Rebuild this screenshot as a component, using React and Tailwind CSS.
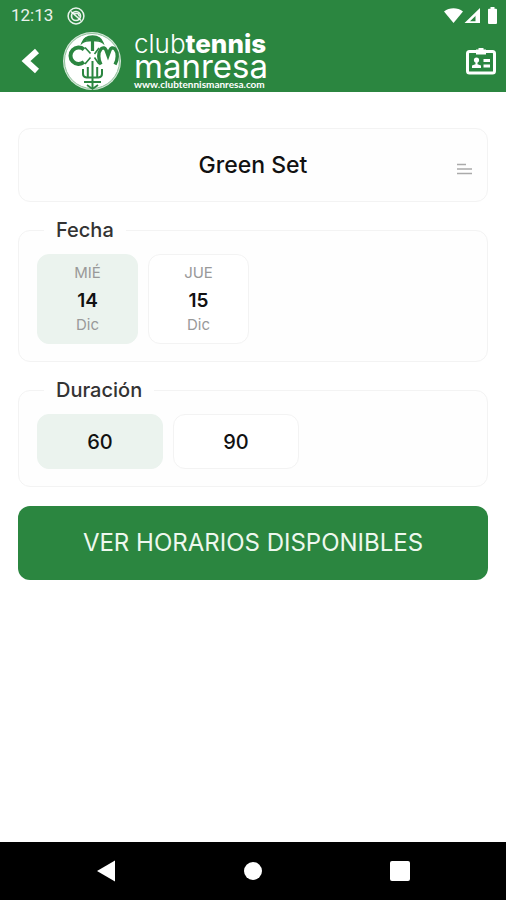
import { useState } from "react";

const courts = ["Green Set", "Tierra batida", "Pádel"];

const days = [
  { weekday: "MIÉ", day: "14", month: "Dic" },
  { weekday: "JUE", day: "15", month: "Dic" },
];

const durations = ["60", "90"];

function StatusBar() {
  return (
    <div className="flex h-8 items-center justify-between pr-2 pl-[11px] font-[Roboto,sans-serif] text-[17px] text-white/90">
      <div className="flex items-center gap-[14px]">
        <span>12:13</span>
        <svg width="18" height="18" viewBox="0 0 18 18" fill="none" stroke="currentColor" aria-hidden="true">
          <circle cx="9" cy="9" r="7.9" strokeWidth="1.5" />
          <circle cx="9" cy="9" r="4.5" strokeWidth="1.7" />
          <path d="M4 4.5 14 13.5M7 6.5h4l1.5 3" strokeWidth="1.6" />
        </svg>
      </div>
      <svg
        width="54"
        height="18"
        viewBox="0 0 54 18"
        fill="currentColor"
        className="text-white"
        aria-hidden="true"
      >
        <path d="M0 4.5C5.5 .2 13.5 .2 19 4.5L9.5 16z" />
        <path d="M36 1v15H20.5zM34 6.5 26 14.3h5.500V9z" fillRule="evenodd" />
        <path d="M46.5 0h4v1.800h1.500q1 0 1 1V16q0 1-1 1h-7q-1 0-1-1V2.800q0-1 1-1h1.500z" />
      </svg>
    </div>
  );
}

function Crest() {
  return (
    <svg width="60" height="60" viewBox="0 0 60 60" fill="none" aria-hidden="true">
      <circle cx="30" cy="29" r="29" fill="#d5e8d9" />
      <circle cx="30" cy="29" r="27.5" stroke="#8fc09a" strokeWidth="1" fill="#fff" />
      <g stroke="#2b8640">
        {/* T */}
        <path d="M20 11C22 5 26 4 30.5 4s8.5 1 10.500 7c-3-2.500-6-2.500-10.500-2.500S23 8.500 20 11z" fill="#2b8640" strokeWidth="1.5" />
        <path d="M30.5 8v11" strokeWidth="3.2" />
        {/* C */}
        <path d="M22 17.5A8.200 8.200 0 1 0 22 30" strokeWidth="4" />
        <path d="m23 15.5 5.500 6M23 32l5.500-6.500" strokeWidth="1.6" />
        {/* M */}
        <path d="M39 32.500c-3-5-3-12 0-15.500 2-2 4-1 5 1l2 5.500 2-5.500c1-2 3-3 5-1 3 3.500 3 10.500 0 15.500" strokeWidth="3.4" />
        <path d="m37 16-4.500 6M32.500 25.500 37 32" strokeWidth="1.6" />
        {/* racket */}
        <path d="M21 37v5q0 3 3.500 3.500h12q3.500-.5 3.500-3.500v-5M25.800 35v10M35.200 35v10M30.500 29v27" strokeWidth="2" />
        <path d="M22 50h17M25 53l5.500 4 5.500-4" strokeWidth="1.8" />
      </g>
    </svg>
  );
}

function Header() {
  return (
    <header className="bg-[#2b8640] text-white">
      <StatusBar />
      <div className="flex h-[60px] items-start justify-between pr-2 pl-5">
        <div className="flex items-start">
          <button type="button" aria-label="Atrás" className="flex h-[58px] w-[42px] items-center">
            <svg width="20" height="26" viewBox="0 0 20 26" fill="none" stroke="currentColor" strokeWidth="6" aria-hidden="true">
              <path d="M17 3 6 13l11 10" />
            </svg>
          </button>
          <Crest />
          <div className="ml-3 flex flex-col">
            <p className="text-[26px] leading-6 font-light">
              club<span className="font-extrabold">tennis</span>
            </p>
            <p className="text-[33px] leading-5">manresa</p>
            <p className="font-[Lato,sans-serif] text-[10px] leading-4 font-bold">
              www.clubtennismanresa.com
            </p>
          </div>
        </div>
        <button type="button" aria-label="Carnet de socio" className="flex h-[58px] items-center">
          <svg width="33" height="30" viewBox="0 0 33 30" fill="none" aria-hidden="true">
            <rect x="2.5" y="5.5" width="27" height="21.5" rx="2" stroke="currentColor" strokeWidth="3" />
            <path d="M11 3.500h2.500V2h5v1.500H21v5H11z" fill="currentColor" />
            <circle cx="11.5" cy="14" r="2.6" fill="currentColor" />
            <path d="M10.500 15h2v3.200l3.500 1.300V22H7v-2.500l3.500-1.300zM18.500 13H25v3h-6.500zM18.500 18.500H25v3h-6.500z" fill="currentColor" />
          </svg>
        </button>
      </div>
    </header>
  );
}

function OptionGroup({ title, children }) {
  return (
    <fieldset className="rounded-xl border border-[#f3f3f3] bg-[#fefefe] px-[18px] pt-3 pb-[17px]">
      <legend className="ml-[7px] px-3 text-xl leading-6 font-medium text-[#333]">{title}</legend>
      <div className="flex gap-[10px]">{children}</div>
    </fieldset>
  );
}

function NavBar() {
  return (
    <nav className="grid h-[58px] grid-cols-3 bg-black px-8 text-white">
      <button type="button" aria-label="Volver" className="flex items-center justify-center">
        <svg width="20" height="22" viewBox="0 0 20 22" fill="currentColor" aria-hidden="true">
          <path d="M19 .5v21L1 11z" />
        </svg>
      </button>
      <button type="button" aria-label="Inicio" className="flex items-center justify-center">
        <span className="size-[18px] rounded-full bg-white" />
      </button>
      <button type="button" aria-label="Recientes" className="flex items-center justify-center">
        <span className="size-5 rounded-xs bg-white" />
      </button>
    </nav>
  );
}

export default function App() {
  const [court, setCourt] = useState(courts[0]);
  const [day, setDay] = useState("14");
  const [duration, setDuration] = useState("60");

  return (
    <div className="flex min-h-screen flex-col bg-white font-[Inter,sans-serif]">
      <Header />

      <main className="flex grow flex-col gap-4 px-[18px] pt-9">
        <div className="grid items-center">
          <select
            aria-label="Pista"
            value={court}
            onChange={(e) => setCourt(e.target.value)}
            className="col-start-1 row-start-1 h-[74px] w-full appearance-none rounded-xl border border-[#f3f3f3] bg-[#fefefe] text-center text-[23px] font-medium text-[#111] [text-align-last:center]"
          >
            {courts.map((name) => (
              <option key={name}>{name}</option>
            ))}
          </select>
          <svg
            width="15"
            height="12"
            viewBox="0 0 15 12"
            stroke="#aaa"
            strokeWidth="1.5"
            className="pointer-events-none col-start-1 row-start-1 mt-2 mr-4 justify-self-end"
            aria-hidden="true"
          >
            <path d="M0 1.500h9M0 6h15M0 10.500h15" />
          </svg>
        </div>

        <OptionGroup title="Fecha">
          {days.map((d) => (
            <label
              key={d.day}
              className="relative flex h-[90px] w-[101px] cursor-pointer flex-col items-center justify-center rounded-xl border border-[#f3f3f3] bg-white text-[15px] leading-6 text-[#999] has-checked:border-[#ebf3ee] has-checked:bg-[#ebf3ee]"
            >
              <input
                type="radio"
                name="day"
                checked={day === d.day}
                onChange={() => setDay(d.day)}
                className="sr-only"
              />
              <span>{d.weekday}</span>
              <span className="pt-1 text-[19px] leading-6 font-semibold text-[#111]">{d.day}</span>
              <span>{d.month}</span>
            </label>
          ))}
        </OptionGroup>

        <OptionGroup title="Duración">
          {durations.map((minutes) => (
            <label
              key={minutes}
              className="relative flex h-[55px] w-[126px] cursor-pointer items-center justify-center rounded-xl border border-[#f3f3f3] bg-white text-xl font-medium text-[#111] has-checked:border-[#ebf3ee] has-checked:bg-[#ebf3ee]"
            >
              <input
                type="radio"
                name="duration"
                checked={duration === minutes}
                onChange={() => setDuration(minutes)}
                className="sr-only"
              />
              {minutes}
            </label>
          ))}
        </OptionGroup>

        <button type="button" className="mt-[3px] h-[74px] rounded-xl bg-[#2b8640] text-2xl text-[#eef8ee]">
          VER HORARIOS DISPONIBLES
        </button>
      </main>

      <NavBar />
    </div>
  );
}
